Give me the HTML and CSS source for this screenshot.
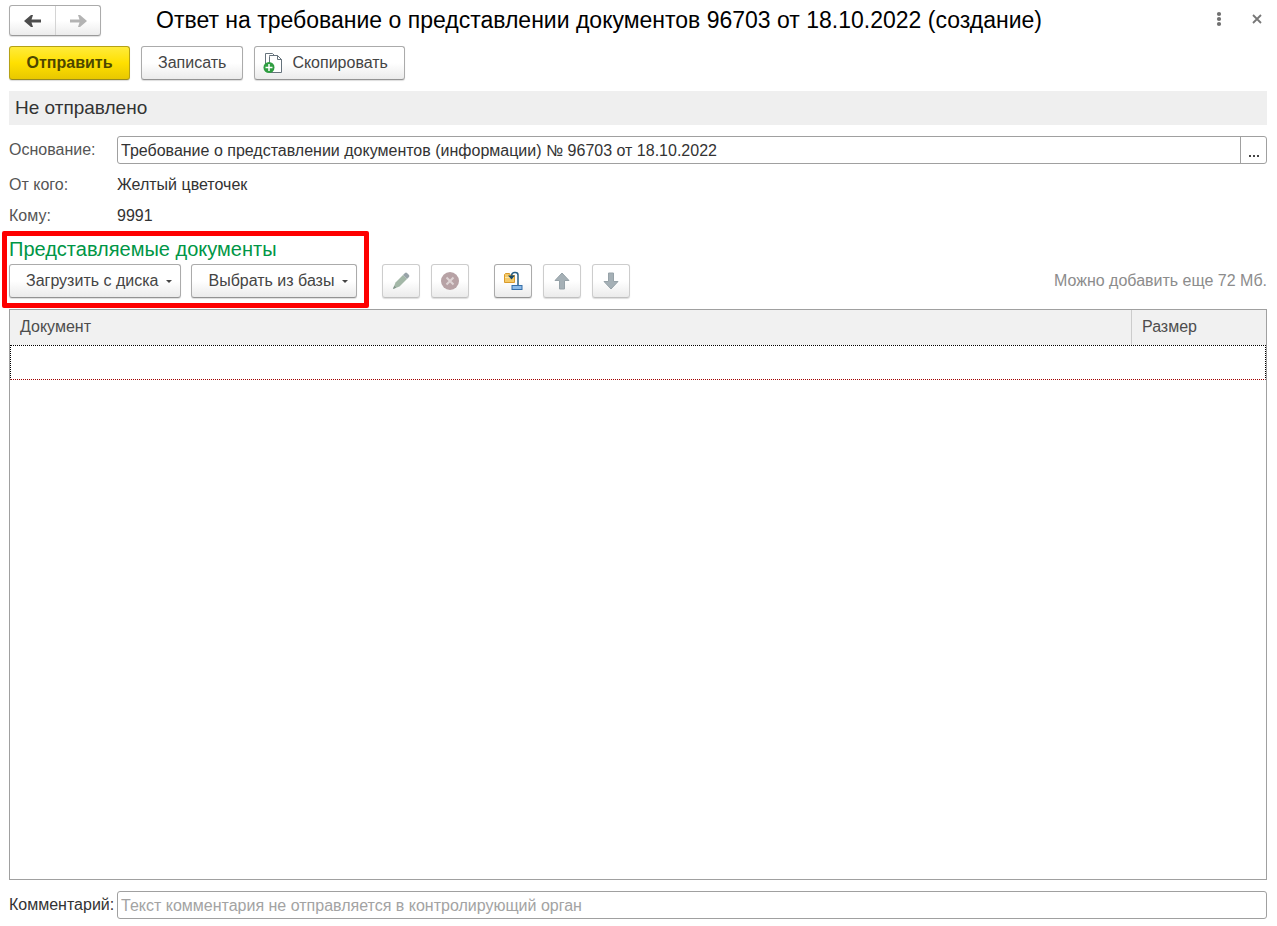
FILE: index.html
```html
<!DOCTYPE html>
<html lang="ru">
<head>
<meta charset="utf-8">
<title>Ответ на требование о представлении документов</title>
<link rel="stylesheet" href="styles.css">
</head>
<body>
<form class="page">
  <header class="header">
    <div class="nav">
      <button type="button" class="nav-btn" aria-label="Назад"><svg width="18" height="14" viewBox="0 0 18 14"><path d="M0 7 7 1h2L7.500 5.500H17v3H7.500L9 13H7z" fill="#4d4d4d"/></svg></button>
      <button type="button" class="nav-btn" aria-label="Вперед"><svg width="18" height="14" viewBox="0 0 18 14"><path d="M18 7 11 1H9l1.500 4.500H1v3h9.500L9 13h2z" fill="#b3b3b3"/></svg></button>
    </div>
    <h1 class="title">Ответ на требование о представлении документов 96703 от 18.10.2022 (создание)</h1>
    <div class="window-tools">
      <button type="button" class="plain" aria-label="Меню"><svg width="6" height="16" viewBox="0 0 6 16" fill="#707070"><circle cx="3" cy="3" r="2.100"/><circle cx="3" cy="8" r="2.100"/><circle cx="3" cy="13" r="2.100"/></svg></button>
      <button type="button" class="plain" aria-label="Закрыть"><svg width="10" height="10" viewBox="0 0 10 10"><path d="M1 1l8 8M9 1 1 9" stroke="#777" stroke-width="1.800"/></svg></button>
    </div>
  </header>

  <div class="commands">
    <button type="button" class="btn primary">Отправить</button>
    <button type="button" class="btn">Записать</button>
    <button type="button" class="btn with-icon"><svg width="20" height="22" viewBox="0 0 20 22"><path d="M2.500 14V1.500h7l2 2" fill="#fff" stroke="#66737c"/><path d="M6.500 4.500V3.500h8l4 4v13h-12z" fill="#fff" stroke="#66737c"/><path d="M14.500 3.500v4h4z" fill="#fff" stroke="#66737c"/><circle cx="6" cy="15.500" r="5.500" fill="#2f9e41"/><path d="M6 12v7M2.500 15.500h7" stroke="#fff" stroke-width="1.500"/></svg>Скопировать</button>
  </div>

  <div class="status">Не отправлено</div>

  <div class="fields">
    <label class="label" for="basis">Основание:</label>
    <div class="picker">
      <input class="picker-input" id="basis" type="text" value="Требование о представлении документов (информации) № 96703 от 18.10.2022">
      <button type="button" class="picker-btn" aria-label="Выбрать"><svg width="12" height="2" viewBox="0 0 12 2" fill="#444"><path d="M1 0h2v2H1zM5 0h2v2H5zM9 0h2v2H9z"/></svg></button>
    </div>
    <span class="label">От кого:</span><span>Желтый цветочек</span>
    <span class="label">Кому:</span><span>9991</span>
  </div>

  <div class="toolbar">
    <section class="sources">
      <h2 class="heading">Представляемые документы</h2>
      <div class="source-buttons">
        <button type="button" class="btn drop">Загрузить с диска<svg width="6" height="3" viewBox="0 0 6 3"><path d="M0 0h6L3 3z" fill="#444"/></svg></button>
        <button type="button" class="btn drop">Выбрать из базы<svg width="6" height="3" viewBox="0 0 6 3"><path d="M0 0h6L3 3z" fill="#444"/></svg></button>
      </div>
    </section>
    <div class="tools">
      <button type="button" class="btn tool off" aria-label="Изменить"><svg width="20" height="20" viewBox="0 0 20 20"><path d="M2 18 4.500 11.500 12 4l4 4-7.500 7.500z" fill="#a3b7a7"/><path d="M12 4l2-2q1-.8 2 0l2 2q.8 1 0 2l-2 2z" fill="#98a3a8"/><path d="M2 18l1.200-3.200 2 2z" fill="#81948a"/></svg></button>
      <button type="button" class="btn tool off" aria-label="Удалить"><svg width="20" height="20" viewBox="0 0 20 20"><circle cx="10" cy="10" r="9" fill="#b7a2a5"/><path d="M6.500 6.500l7 7M13.500 6.500l-7 7" stroke="#ded4d5" stroke-width="2"/></svg></button>
    </div>
    <div class="tools">
      <button type="button" class="btn tool" aria-label="Открыть файл"><svg width="20" height="20" viewBox="0 0 20 20"><path d="M1.500 11.500v-8l1-1h4l1 2h4v7z" fill="#f5ca68" stroke="#d99a2b"/><path d="M2 6.500h9" stroke="#fbe5aa"/><path d="M8.500 4.500q.5-3 3-3h1q2.500 0 2.500 2.500v11" fill="none" stroke="#285f86" stroke-width="1.500"/><path d="M5 4.500h7l-3.500 4z" fill="#174a6b"/><rect x="9" y="14.500" width="10" height="4" fill="#8dbbe8" stroke="#356fa9"/></svg></button>
      <button type="button" class="btn tool off" aria-label="Вверх"><svg width="20" height="20" viewBox="0 0 20 20"><path d="M10 2l7 7.500h-4.500V18h-5V9.500H3z" fill="#a5b0b6" stroke="#96a2a8"/></svg></button>
      <button type="button" class="btn tool off" aria-label="Вниз"><svg width="20" height="20" viewBox="0 0 20 20"><path d="M10 18l7-7.500h-4.500V2h-5v8.500H3z" fill="#a5b0b6" stroke="#96a2a8"/></svg></button>
    </div>
    <span class="quota">Можно добавить еще 72 Мб.</span>
  </div>

  <div class="list">
    <table class="docs">
      <thead><tr><th>Документ</th><th class="size">Размер</th></tr></thead>
      <tbody><tr class="current"><td colspan="2"></td></tr></tbody>
    </table>
  </div>

  <div class="comment">
    <label for="comment">Комментарий:</label>
    <input class="comment-input" id="comment" type="text" placeholder="Текст комментария не отправляется в контролирующий орган">
  </div>
</form>
</body>
</html>
```
FILE: styles.css
```css
* { box-sizing: border-box; }
body {
  margin: 0;
  background: #fff;
  color: #333;
  font: 16px/20px "Liberation Sans", Arial, sans-serif;
}
button, input { font: inherit; color: inherit; }
svg { display: block; flex: none; }
.page {
  display: flex;
  flex-direction: column;
  min-height: 100vh;
  padding: 5px 10px 7px 9px;
}
.header { display: flex; align-items: center; }
.nav {
  display: flex;
  height: 31px;
  border: 1px solid #ababab;
  border-bottom-color: #999;
  border-radius: 3px;
  background: linear-gradient(#fff 50%, #ececec);
  box-shadow: 0 1px 1px #ddd;
}
.nav-btn {
  display: flex;
  align-items: center;
  justify-content: center;
  width: 45px;
  padding: 0;
  border: 0;
  background: none;
}
.nav-btn + .nav-btn { border-left: 1px solid #d4d4d4; }
.title {
  flex: 1;
  margin: 0 0 1px 55px;
  color: #000;
  font-size: 23px;
  line-height: 30px;
  font-weight: 400;
}
.window-tools {
  display: flex;
  align-items: center;
  gap: 22px;
  padding: 0 1px 3px 0;
}
.plain {
  display: flex;
  padding: 4px;
  border: 0;
  background: none;
}
.commands { display: flex; gap: 11px; margin-top: 10px; }
.btn {
  display: flex;
  align-items: center;
  justify-content: center;
  height: 34px;
  padding: 0 16px;
  border: 1px solid #ababab;
  border-bottom-color: #939393;
  border-radius: 3px;
  background: linear-gradient(#fff 50%, #ebebeb);
  box-shadow: 0 1px 1px #ddd;
  color: #444;
  white-space: nowrap;
}
.primary {
  min-width: 121px;
  border-color: #b5a115;
  border-bottom-color: #998a20;
  background: linear-gradient(#ffeb3b, #ffe000 50%, #e8c800);
  color: #4d4700;
  font-weight: 700;
}
.with-icon { gap: 9px; padding-left: 8px; }
.status {
  margin-top: 11px;
  padding: 5px 6px;
  background: #efefef;
  font-size: 19px;
  line-height: 24px;
}
.fields {
  display: grid;
  grid-template-columns: 108px 1fr;
  align-items: center;
  row-gap: 11px;
  margin-top: 11px;
}
.label { color: #555; }
.picker {
  display: flex;
  height: 28px;
  border: 1px solid #a0a0a0;
  border-radius: 3px;
}
.picker-input {
  flex: 1;
  min-width: 0;
  padding: 1px 3px 0;
  border: 0;
  background: none;
}
.picker-btn {
  display: flex;
  align-items: flex-end;
  justify-content: center;
  width: 26px;
  padding: 0 0 6px;
  border: 0;
  border-left: 1px solid #a0a0a0;
  background: none;
}
.toolbar { display: flex; align-items: flex-end; margin-top: 11px; }
.sources { position: relative; }
.sources::after {
  content: "";
  position: absolute;
  inset: -6px -12px -10px -7px;
  border: 5px solid #fe0000;
  border-radius: 2px;
  pointer-events: none;
}
.heading {
  margin: 0 0 3px;
  color: #009646;
  font-size: 20px;
  line-height: 24px;
  font-weight: 400;
}
.source-buttons { display: flex; gap: 10px; }
.drop { gap: 8px; padding-right: 8px; }
.tools { display: flex; gap: 11px; margin-left: 25px; }
.tool { width: 38px; padding: 0; }
.off { border-color: #cdcdcd; border-bottom-color: #c0c0c0; }
.quota { margin-left: auto; color: #8c8c8c; line-height: 34px; }
.list {
  flex: 1;
  margin-top: 11px;
  border: 1px solid #a0a0a0;
}
.docs { width: 100%; border-collapse: separate; border-spacing: 0; }
.docs th {
  height: 35px;
  padding: 0 10px 2px;
  background: #f1f1f1;
  color: #4d4d4d;
  font-weight: 400;
  text-align: left;
}
.docs .size { width: 135px; border-left: 1px solid #ccc; }
.current td {
  height: 35px;
  padding: 0;
  border: 1px dotted #000;
  border-bottom-color: #a00000;
}
.comment {
  display: grid;
  grid-template-columns: 108px 1fr;
  align-items: center;
  margin-top: 11px;
}
.comment-input {
  width: 100%;
  height: 28px;
  padding: 1px 3px 0;
  border: 1px solid #a0a0a0;
  border-radius: 3px;
}
.comment-input::placeholder { color: #a3a3a3; opacity: 1; }
```
